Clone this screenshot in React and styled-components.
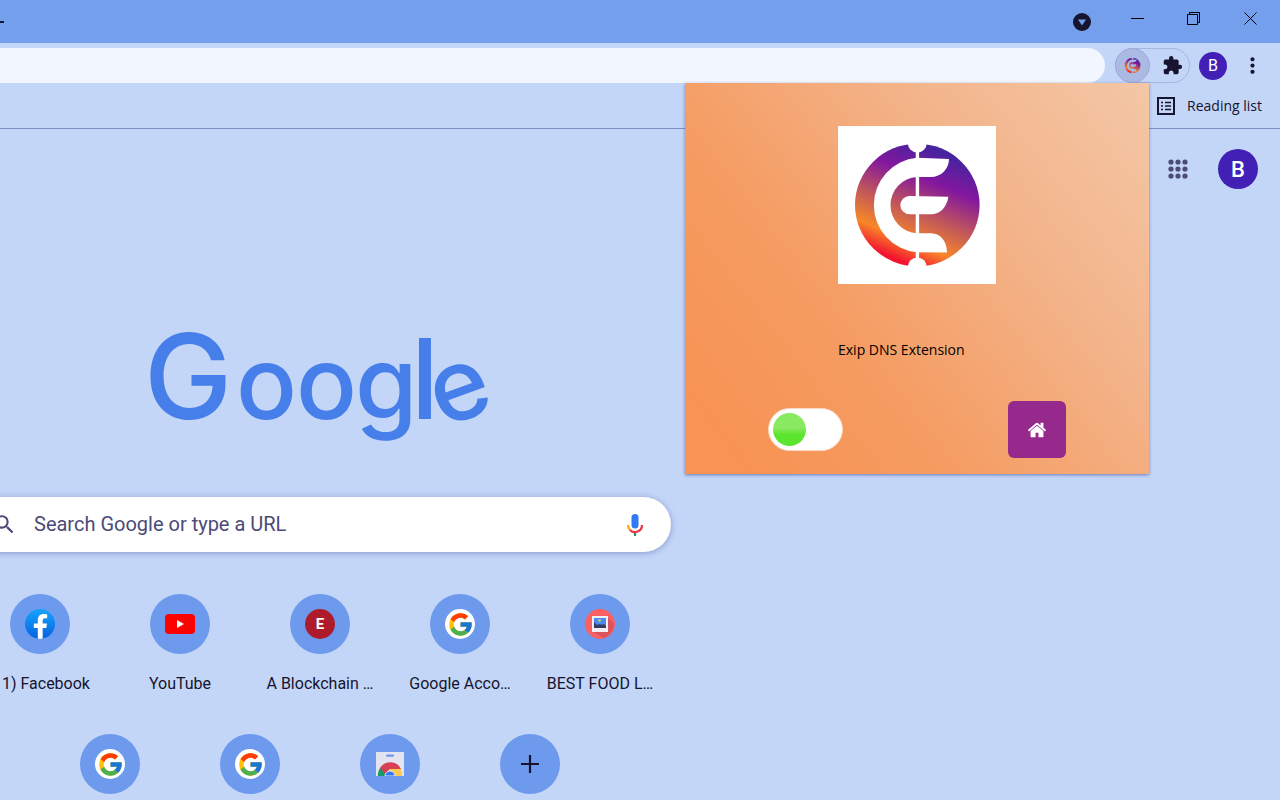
import React, { useId, useState } from "react";
import styled, { createGlobalStyle } from "styled-components";
import { FcGoogle } from "react-icons/fc";
import { FaFacebookF } from "react-icons/fa";
import { MdExtension, MdMoreVert, MdSearch } from "react-icons/md";

const shortcuts = [
  { label: "\u00a0\u00a0\u00a01) Facebook", icon: "facebook" },
  { label: "YouTube", icon: "youtube" },
  { label: "A Blockchain …", icon: "letter" },
  { label: "Google Acco…", icon: "google" },
  { label: "BEST FOOD L…", icon: "photo" },
  { name: "Google", icon: "google" },
  { name: "Google", icon: "google" },
  { name: "Web Store", icon: "store" },
];

function App() {
  const [enabled, setEnabled] = useState(false);

  return (
    <Browser>
      <GlobalStyle />
      <TitleBar>
        <NewTab aria-label="New tab">
          <svg width="14" height="14" viewBox="0 0 14 14">
            <path d="M7 0v14M0 7h14" stroke="#16142e" strokeWidth="2" />
          </svg>
        </NewTab>
        <WindowButtons>
          <WindowButton $width={54} aria-label="Search tabs">
            <TabSearchIcon />
          </WindowButton>
          <WindowButton $width={57} aria-label="Minimize">
            <WindowIcon d="M0 6.5h13" />
          </WindowButton>
          <WindowButton $width={55} aria-label="Restore">
            <WindowIcon d="M.5 2.5h10v10h-10zM2.5 2.5V.5h10v10h-2" />
          </WindowButton>
          <WindowButton $width={59} aria-label="Close">
            <WindowIcon d="M.5 .5l12 12M12.5 .5l-12 12" />
          </WindowButton>
        </WindowButtons>
      </TitleBar>

      <Toolbar>
        <Omnibox aria-label="Address" />
        <Extensions>
          <ExtensionButton aria-label="Exip DNS Extension">
            <ExipMark size={17} />
          </ExtensionButton>
          <PuzzleButton aria-label="Extensions">
            <MdExtension size={21} />
          </PuzzleButton>
        </Extensions>
        <Avatar $size={28} $font={16}>B</Avatar>
        <MenuButton aria-label="Menu">
          <MdMoreVert size={25} />
        </MenuButton>
      </Toolbar>

      <BookmarksBar>
        <ReadingList>
          <ListIcon />
          Reading list
        </ReadingList>
      </BookmarksBar>

      <Page>
        <Content>
          <GoogleLogo />
          <SearchBox>
            <MdSearch size={25} />
            <SearchInput
              aria-label="Search"
              placeholder="Search Google or type a URL"
            />
            <MicButton aria-label="Search by voice">
              <MicIcon />
            </MicButton>
          </SearchBox>
          <Shortcuts>
            {shortcuts.map((item, i) => (
              <Shortcut key={i} href="#" aria-label={item.label || item.name}>
                <Circle>
                  <ShortcutIcon type={item.icon} />
                </Circle>
                {item.label && <ShortcutLabel>{item.label}</ShortcutLabel>}
              </Shortcut>
            ))}
            <AddShortcut aria-label="Add shortcut">
              <Circle>
                <svg width="18" height="18" viewBox="0 0 18 18">
                  <path d="M9 0v18M0 9h18" stroke="#16142e" strokeWidth="2.2" />
                </svg>
              </Circle>
            </AddShortcut>
          </Shortcuts>
        </Content>
        <Account>
          <AppsButton aria-label="Google apps">
            <AppsIcon />
          </AppsButton>
          <Avatar $size={40} $font={22} $bold>B</Avatar>
        </Account>
      </Page>

      <Popup>
        <PopupHead>
          <LogoCard>
            <ExipMark size={158} />
          </LogoCard>
          <PopupTitle>Exip DNS Extension</PopupTitle>
        </PopupHead>
        <Controls>
          <Toggle
            type="checkbox"
            aria-label="Enable Exip DNS"
            checked={enabled}
            onChange={() => setEnabled(!enabled)}
          />
          <HomeButton aria-label="Home">
            <HomeIcon />
          </HomeButton>
        </Controls>
      </Popup>
    </Browser>
  );
}

export default App;

function WindowIcon({ d }) {
  return (
    <svg width="13" height="13" viewBox="0 0 13 13" fill="none" stroke="#000">
      <path d={d} />
    </svg>
  );
}

function TabSearchIcon() {
  return (
    <svg width="18" height="18" viewBox="0 0 18 18">
      <circle cx="9" cy="9" r="9" fill="#16142e" />
      <path d="M5 6.5h8l-4 6z" fill="#739fec" />
    </svg>
  );
}

function ListIcon() {
  return (
    <svg width="18" height="18" viewBox="0 0 18 18" fill="none" stroke="#16142e">
      <rect x="1" y="1" width="16" height="16" strokeWidth="2" />
      <path d="M4 5.5h2M4 9h2M4 12.5h2M8 5.5h6M8 9h6M8 12.5h6" strokeWidth="1.6" />
    </svg>
  );
}

function AppsIcon() {
  const steps = [3, 10, 17];
  return (
    <svg width="20" height="20" viewBox="0 0 20 20" fill="#4c4a77">
      {steps.map((y) =>
        steps.map((x) => <circle key={`${x}-${y}`} cx={x} cy={y} r="2.6" />)
      )}
    </svg>
  );
}

function HomeIcon() {
  return (
    <svg width="20" height="20" viewBox="0 0 1792 1792" fill="#fff">
      <path d="M1472 992v480q0 26-19 45t-45 19h-384v-384h-256v384h-384q-26 0-45-19t-19-45v-480q0-1 .5-3t.5-3l575-474 575 474q1 2 1 6zm223-69l-62 74q-8 9-21 11h-3q-13 0-21-7l-692-577-692 577q-12 8-24 7-13-2-21-11l-62-74q-8-10-7-23.5t11-21.5l719-599q32-26 76-26t76 26l244 204v-195q0-14 9-23t23-9h192q14 0 23 9t9 23v408l219 182q10 8 11 21.5t-7 23.5z" />
    </svg>
  );
}

function MicIcon() {
  return (
    <svg width="24" height="24" viewBox="0 0 24 24" fill="none">
      <rect x="8.5" y="1" width="7" height="14.5" rx="3.5" fill="#3478f6" />
      <path d="M12 19v4" stroke="#1e9e5a" strokeWidth="2.2" />
      <path d="M5 12a7 7 0 0 0 2 5" stroke="#f9ab00" strokeWidth="2.2" />
      <path d="M7 17a7 7 0 0 0 12-5" stroke="#ea3449" strokeWidth="2.2" />
    </svg>
  );
}

function GoogleLogo() {
  return (
    <Logo width="338" height="112" viewBox="0 0 338 112" role="img" aria-label="Google">
      <text y="85" fill="#467fea">
        <tspan x="-7" fontSize="118">G</tspan>
        <tspan x="85 145 204" fontSize="101">oog</tspan>
        <tspan x="260" fontSize="111">l</tspan>
        <tspan x="291" y="94" rotate="-20" fontSize="100">e</tspan>
      </text>
    </Logo>
  );
}

function ExipMark({ size }) {
  const id = useId();
  return (
    <svg
      width={size}
      height={size}
      viewBox={size < 40 ? "12 12 134 134" : "0 0 158 158"}
    >
      <defs>
        <linearGradient id={id} gradientUnits="userSpaceOnUse" x1="56" y1="132" x2="100" y2="26">
          <stop offset="0" stopColor="#f3142f" />
          <stop offset="0.19" stopColor="#f7872a" />
          <stop offset="0.42" stopColor="#c65c55" />
          <stop offset="0.74" stopColor="#83179e" />
          <stop offset="1" stopColor="#49239f" />
        </linearGradient>
        <mask id={`${id}m`}>
          <ellipse cx="79.3" cy="79" rx="62.3" ry="61.3" fill="#fff" />
          <circle cx="79.3" cy="17" r="9.5" />
          <circle cx="79.3" cy="141" r="9.5" />
          <rect x="77.7" y="10" width="3.4" height="138" />
          <path d="M79 31.7L111 33C111 43 103 51 93 51H79A28.2 28.2 0 0 0 79 107.3H93C103 107.3 109 116 109 126.6L79 126.3A47.5 47.5 0 0 1 79 31.7z" />
          <path d="M71.5 70L110.3 70.7C109 81 102 88.3 93 88.3H71.5A9.15 9.15 0 0 1 71.5 70z" />
        </mask>
      </defs>
      <rect width="158" height="158" fill={`url(#${id})`} mask={`url(#${id}m)`} />
    </svg>
  );
}

function ShortcutIcon({ type }) {
  if (type === "facebook") {
    return (
      <FacebookBadge>
        <FaFacebookF size={25} />
      </FacebookBadge>
    );
  }
  if (type === "youtube") {
    return (
      <svg width="30" height="22" viewBox="0 0 30 22">
        <rect y="1" width="30" height="20" rx="4" fill="#f00" />
        <path d="M12 7l7 4-7 4z" fill="#fff" />
      </svg>
    );
  }
  if (type === "letter") return <LetterBadge>E</LetterBadge>;
  if (type === "google") {
    return (
      <GoogleBadge>
        <FcGoogle size={27} />
      </GoogleBadge>
    );
  }
  if (type === "photo") {
    return (
      <svg width="30" height="30" viewBox="0 0 30 30">
        <circle cx="15" cy="15" r="15" fill="#fb6063" />
        <path d="M22 7l7 8a15 15 0 0 1-10 14L8 23z" fill="#d9545c" />
        <path d="M7 7h16v16H7z" fill="#f2eef6" />
        <path d="M9 9h12v10H9z" fill="#4a8cf0" />
        <path d="M9 19v-6l3 3 3-1 2 1 2-1 2 2v2z" fill="#383a62" />
        <circle cx="14.5" cy="11.5" r="1.3" fill="#e8c85a" />
      </svg>
    );
  }
  return (
    <svg width="28" height="24" viewBox="0 0 28 24">
      <path d="M0 0h28v24H0z" fill="#e3e4f0" />
      <rect x="10" y="2.5" width="8" height="2.2" rx="1" fill="#6b9aec" />
      <path d="M2 24a12 12 0 0 1 3-9l6 9z" fill="#159a68" />
      <path d="M4 16a12 12 0 0 1 21 1H14l-5 5z" fill="#d63f54" />
      <path d="M14 17h11a12 12 0 0 1 1 7H15z" fill="#fdc94f" />
      <path d="M9 24a5 5 0 0 1 10 0z" fill="#3478f6" stroke="#e3e4f0" />
    </svg>
  );
}

const GlobalStyle = createGlobalStyle`
  * {
    box-sizing: border-box;
  }

  body {
    margin: 0;
    background: #c3d6f8;
    font-family: Roboto, sans-serif;
    color: #16142e;
  }

  button {
    display: flex;
    align-items: center;
    justify-content: center;
    padding: 0;
    border: 0;
    background: none;
    color: inherit;
    font: inherit;
    cursor: pointer;
  }

  svg {
    display: block;
    flex-shrink: 0;
  }
`;

const Browser = styled.div`
  position: relative;
  display: flex;
  flex-direction: column;
  height: 100vh;
  overflow: hidden;
`;

const TitleBar = styled.header`
  display: flex;
  flex-shrink: 0;
  justify-content: space-between;
  height: 43px;
  background: #739fec;
`;

const NewTab = styled.button`
  margin-left: -10px;
`;

const WindowButtons = styled.div`
  display: flex;
  height: 37px;
`;

const WindowButton = styled.button`
  width: ${({ $width }) => $width}px;

  &:first-child {
    height: 43px;
  }
`;

const Toolbar = styled.div`
  display: flex;
  flex-shrink: 0;
  align-items: center;
  height: 40px;
  padding: 5px 15px 0 0;
`;

const Omnibox = styled.input`
  flex: 1;
  min-width: 0;
  height: 35px;
  padding: 0 20px;
  border: 0;
  border-radius: 0 18px 18px 0;
  background: #f1f6ff;
`;

const Extensions = styled.div`
  display: flex;
  width: 75px;
  height: 35px;
  margin: 0 9px 0 10px;
  border: 1px solid #a6b7e2;
  border-radius: 18px;
`;

const ExtensionButton = styled.button`
  width: 35px;
  height: 35px;
  margin: -1px 0 0 -1px;
  border: 1px solid #9caadb !important;
  border-radius: 50%;
  background: #abbae2 !important;
`;

const PuzzleButton = styled.button`
  flex: 1;
  padding-left: 5px !important;
`;

const Avatar = styled.div`
  display: flex;
  flex-shrink: 0;
  align-items: center;
  justify-content: center;
  width: ${({ $size }) => $size}px;
  height: ${({ $size }) => $size}px;
  border-radius: 50%;
  background: #421fb5;
  color: #fff;
  font-size: ${({ $font }) => $font}px;
  font-weight: ${({ $bold }) => ($bold ? 500 : 400)};
`;

const MenuButton = styled.button`
  width: 26px;
  margin-left: 12px;
`;

const BookmarksBar = styled.nav`
  display: flex;
  flex-shrink: 0;
  justify-content: flex-end;
  height: 46px;
  padding-right: 18px;
  border-bottom: 1px solid #7f8fc4;
`;

const ReadingList = styled.button`
  gap: 12px;
  font-family: "Open Sans", sans-serif;
  font-size: 14px;
`;

const Page = styled.main`
  display: flex;
  flex: 1;
  align-items: flex-start;
  justify-content: space-between;
  min-height: 0;
`;

/* wider children stay centred and run off the left edge */
const Content = styled.section`
  display: flex;
  flex-direction: column;
  align-items: center;
  width: 50%;
  padding-top: 205px;
`;

const Logo = styled.svg`
  overflow: visible;
  font-family: Inter, sans-serif;
  font-weight: 500;
`;

const SearchBox = styled.div`
  display: flex;
  align-items: center;
  width: 702px;
  height: 55px;
  margin-top: 51px;
  padding: 0 22px 0 23px;
  border-radius: 28px;
  background: #fff;
  box-shadow: 0 1px 6px rgba(50, 60, 140, 0.4);
  color: #4c4a77;
`;

const SearchInput = styled.input`
  flex: 1;
  min-width: 0;
  margin-left: 17px;
  padding: 0 0 2px;
  border: 0;
  outline: 0;
  color: inherit;
  font-family: inherit;
  font-size: 20px;

  &::placeholder {
    color: #4c4a77;
    opacity: 1;
  }
`;

const MicButton = styled.button`
  width: 28px;
  height: 28px;
`;

const Shortcuts = styled.div`
  display: flex;
  flex-wrap: wrap;
  justify-content: center;
  width: 700px;
  margin-top: 42px;
`;

const Shortcut = styled.a`
  display: flex;
  flex-direction: column;
  align-items: center;
  gap: 20px;
  width: 140px;
  height: 140px;
  color: inherit;
  text-decoration: none;
`;

const AddShortcut = styled(Shortcut).attrs({ as: "button" })`
  justify-content: flex-start;
`;

const Circle = styled.span`
  display: flex;
  align-items: center;
  justify-content: center;
  width: 60px;
  height: 60px;
  border-radius: 50%;
  background: #6e9aee;
`;

const ShortcutLabel = styled.span`
  font-size: 16px;
  line-height: 20px;
  white-space: nowrap;
`;

const Badge = styled.span`
  display: flex;
  align-items: center;
  justify-content: center;
  width: 30px;
  height: 30px;
  overflow: hidden;
  border-radius: 50%;
`;

const FacebookBadge = styled(Badge)`
  align-items: flex-end;
  background: linear-gradient(#18a3fb, #0562e0);
  color: #fff;
`;

const LetterBadge = styled(Badge)`
  background: #ae1c2b;
  color: #fff;
  font-size: 15px;
  font-weight: 700;
`;

const GoogleBadge = styled(Badge)`
  background: #fff;
`;

const Account = styled.div`
  display: flex;
  align-items: center;
  gap: 30px;
  padding: 20px 22px 0 0;
`;

const AppsButton = styled.button`
  width: 20px;
  height: 20px;
`;

const Popup = styled.aside`
  position: absolute;
  top: 83px;
  right: 131px;
  display: flex;
  flex-direction: column;
  align-items: center;
  width: 464px;
  padding: 43px 83px 16px;
  background: linear-gradient(
    52deg,
    #f79354 8%,
    #f59c62 35%,
    #f3b58c 70%,
    #f3c7a6 100%
  );
  box-shadow: 0 1px 3px rgba(50, 60, 140, 0.6);
`;

const PopupHead = styled.div`
  display: flex;
  flex-direction: column;
  align-items: flex-start;
`;

const LogoCard = styled.div`
  background: #fff;
`;

const PopupTitle = styled.div`
  margin-top: 56px;
  color: #000;
  font-family: "Open Sans", sans-serif;
  font-size: 14px;
  line-height: 20px;
`;

const Controls = styled.div`
  display: flex;
  align-items: center;
  justify-content: space-between;
  width: 100%;
  margin-top: 41px;
`;

const Toggle = styled.input`
  appearance: none;
  width: 75px;
  height: 43px;
  margin: 0;
  padding: 4px;
  border: 1px solid #fbd9c3;
  border-radius: 22px;
  background: #fff;
  cursor: pointer;

  &::before {
    content: "";
    display: block;
    width: 33px;
    height: 33px;
    border-radius: 50%;
    background: linear-gradient(#89ea62 45%, #5ce52f 65%);
  }

  &:checked::before {
    margin-left: auto;
  }
`;

const HomeButton = styled.button`
  width: 58px;
  height: 57px;
  border-radius: 6px;
  background: #952a8c !important;
`;
